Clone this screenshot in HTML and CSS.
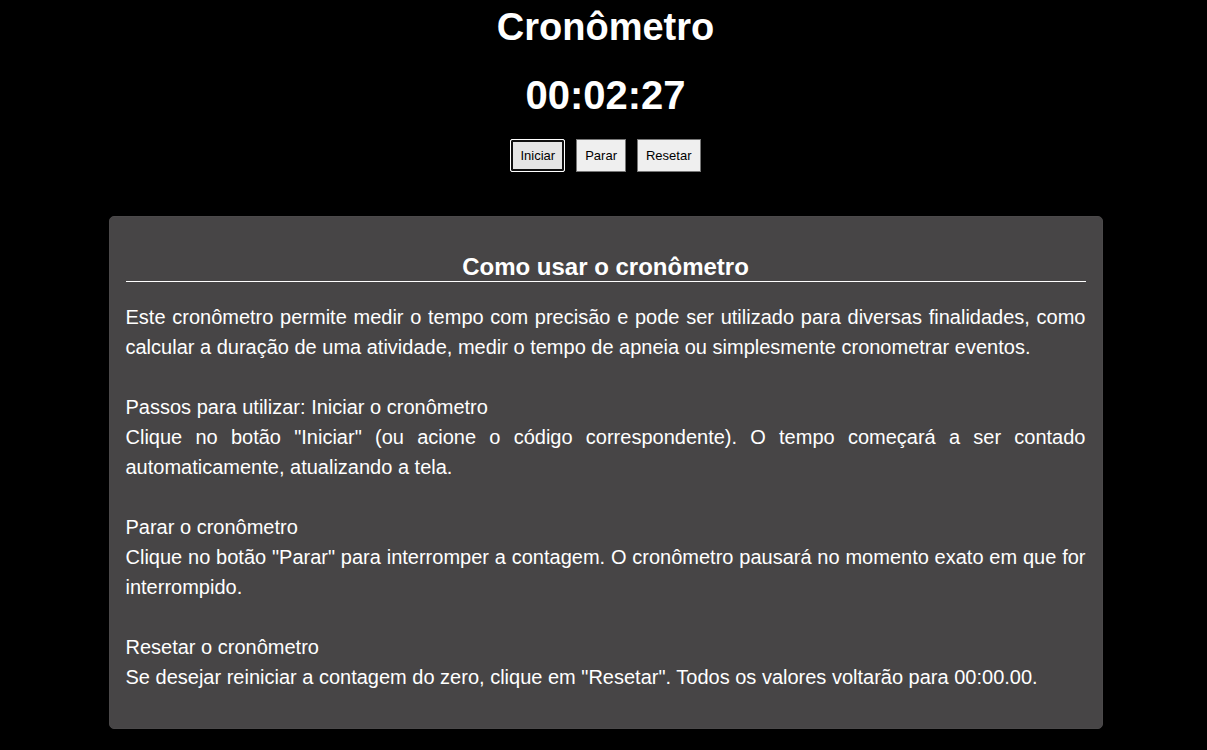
FILE: index.html
```html
<!DOCTYPE html>
<html lang="pt-BR">
<head>
<meta charset="utf-8">
<title>Cronômetro</title>
<link rel="stylesheet" href="styles.css">
</head>
<body>
<main class="page">
  <section class="stopwatch">
    <h1 class="title">Cronômetro</h1>
    <div class="time">00:02:27</div>
    <div class="controls">
      <button class="btn is-focused" type="button">Iniciar</button>
      <button class="btn" type="button">Parar</button>
      <button class="btn" type="button">Resetar</button>
    </div>
  </section>
  <section class="guide">
    <h2 class="guide-title">Como usar o cronômetro</h2>
    <p>Este cronômetro permite medir o tempo com precisão e pode ser utilizado para diversas finalidades, como calcular a duração de uma atividade, medir o tempo de apneia ou simplesmente cronometrar eventos.</p>
    <p>Passos para utilizar: Iniciar o cronômetro<br>Clique no botão "Iniciar" (ou acione o código correspondente). O tempo começará a ser contado automaticamente, atualizando a tela.</p>
    <p>Parar o cronômetro<br>Clique no botão "Parar" para interromper a contagem. O cronômetro pausará no momento exato em que for interrompido.</p>
    <p>Resetar o cronômetro<br>Se desejar reiniciar a contagem do zero, clique em "Resetar". Todos os valores voltarão para 00:00.00.</p>
  </section>
</main>
</body>
</html>
```

FILE: styles.css
```css
html, body {
  margin: 0;
  padding: 0;
  background: #000;
}

body {
  font-family: "Liberation Sans", Arial, sans-serif;
  color: #fff;
  padding-left: 4px;
}

.page {
  display: flex;
  flex-direction: column;
  align-items: center;
}

.stopwatch {
  display: flex;
  flex-direction: column;
  align-items: center;
}

.title {
  margin: 5px 0 0;
  font-size: 38px;
  line-height: 44px;
  font-weight: bold;
}

.time {
  margin-top: 23px;
  font-size: 40px;
  line-height: 46px;
  font-weight: bold;
}

.controls {
  display: flex;
  gap: 11px;
  margin-top: 21px;
}

.btn {
  font-family: "Liberation Sans", Arial, sans-serif;
  font-size: 13px;
  line-height: 15px;
  padding: 8px 8px;
  color: #000;
  background: #efefef;
  border: 1px solid #767676;
  border-radius: 0;
}

.btn.is-focused {
  padding: 8px 9px;
  background: #e5e5e5;
  border-color: #fff;
  border-radius: 2px;
  box-shadow: inset 0 0 0 2px #101010;
}

.guide {
  margin-top: 44px;
  width: 960px;
  padding: 16px;
  background: #474546;
  border: 1px solid #4b494a;
  border-radius: 5px;
}

.guide-title {
  margin: 20px 0;
  font-size: 24px;
  line-height: normal;
  text-align: center;
  border-bottom: 1px solid #fff;
}

.guide p {
  margin: 0 0 30px;
  font-size: 20px;
  line-height: 30px;
  text-align: justify;
}

.guide p:last-child {
  margin-bottom: 20px;
}
```
